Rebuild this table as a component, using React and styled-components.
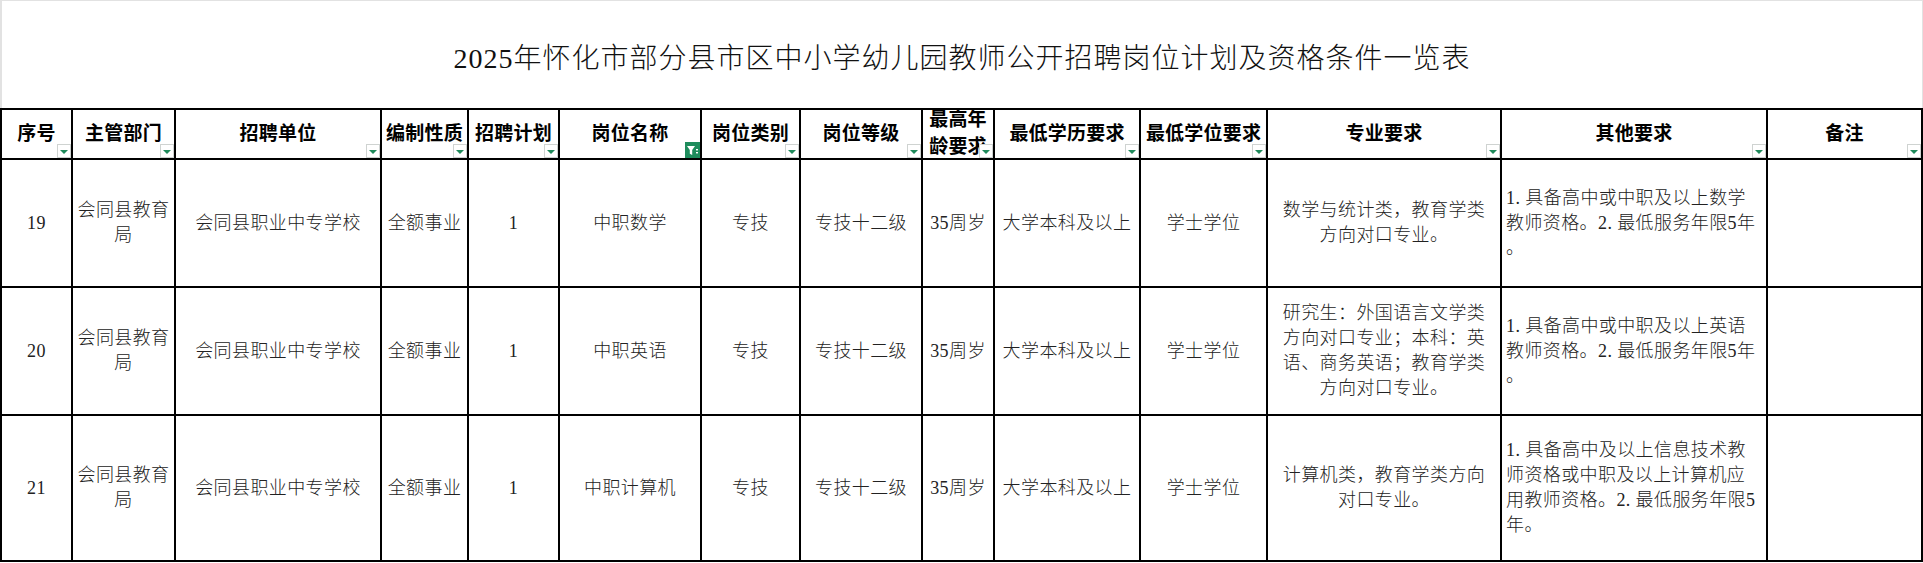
import React from 'react';
import styled, { createGlobalStyle } from 'styled-components';

const GlobalStyle = createGlobalStyle`
    html, body {
        margin: 0;
        padding: 0;
        background: #fff;
        overflow: hidden;
    }
    body {
        font-family: "Liberation Serif", "Noto Sans CJK SC", serif;
    }
`;

// 列宽按截图量出来的
const columns = [
    { title: ['序号'], width: 71 },
    { title: ['主管部门'], width: 103 },
    { title: ['招聘单位'], width: 206 },
    { title: ['编制性质'], width: 87 },
    { title: ['招聘计划'], width: 91 },
    { title: ['岗位名称'], width: 142, active: true },
    { title: ['岗位类别'], width: 99 },
    { title: ['岗位等级'], width: 122 },
    { title: ['最高年', '龄要求'], width: 72 },
    { title: ['最低学历要求'], width: 146 },
    { title: ['最低学位要求'], width: 127 },
    { title: ['专业要求'], width: 234 },
    { title: ['其他要求'], width: 266 },
    { title: ['备注'], width: 155 },
];

const rows = [
    {
        height: 128,
        cells: [
            ['19'], ['会同县教育', '局'], ['会同县职业中专学校'], ['全额事业'], ['1'],
            ['中职数学'], ['专技'], ['专技十二级'], ['35周岁'], ['大学本科及以上'], ['学士学位'],
            ['数学与统计类，教育学类', '方向对口专业。'],
            ['1. 具备高中或中职及以上数学', '教师资格。2. 最低服务年限5年', '。'],
            [],
        ],
    },
    {
        height: 128,
        cells: [
            ['20'], ['会同县教育', '局'], ['会同县职业中专学校'], ['全额事业'], ['1'],
            ['中职英语'], ['专技'], ['专技十二级'], ['35周岁'], ['大学本科及以上'], ['学士学位'],
            ['研究生：外国语言文学类', '方向对口专业；本科：英', '语、商务英语；教育学类', '方向对口专业。'],
            ['1. 具备高中或中职及以上英语', '教师资格。2. 最低服务年限5年', '。'],
            [],
        ],
    },
    {
        height: 146,
        cells: [
            ['21'], ['会同县教育', '局'], ['会同县职业中专学校'], ['全额事业'], ['1'],
            ['中职计算机'], ['专技'], ['专技十二级'], ['35周岁'], ['大学本科及以上'], ['学士学位'],
            ['计算机类，教育学类方向', '对口专业。'],
            ['1. 具备高中及以上信息技术教', '师资格或中职及以上计算机应', '用教师资格。2. 最低服务年限5', '年。'],
            [],
        ],
    },
];

const LEFT_COL = 12; // 其他要求 左对齐

const Sheet = styled.div`
    width: 1923px;
    box-sizing: border-box;
`;

const TitleBar = styled.div`
    height: 108px;
    box-sizing: border-box;
    border-top: 1px solid #e2e2e2;
    border-left: 2px solid #e2e2e2;
    border-right: 1px solid #e2e2e2;
    display: flex;
    align-items: center;
    justify-content: center;
    font-size: 28px;
    font-weight: 300;
    letter-spacing: 1px;
    color: #111;
    padding-top: 2px;
`;

const Grid = styled.div`
    display: grid;
    grid-template-columns: ${p => p.$cols};
    grid-template-rows: ${p => p.$rows};
    border-left: 2px solid #000;
    border-top: 2px solid #000;
`;

const Cell = styled.div`
    box-sizing: border-box;
    border-right: 2px solid #000;
    border-bottom: 2px solid #000;
    display: flex;
    flex-direction: column;
    justify-content: center;
    align-items: ${p => (p.$left ? 'flex-start' : 'center')};
    text-align: ${p => (p.$left ? 'left' : 'center')};
    padding: 0 ${p => (p.$left ? '4px' : '2px')};
    font-size: 18px;
    font-weight: 300;
    line-height: 25px;
    letter-spacing: 0.4px;
    color: #222;
    overflow: hidden;
`;

const HeadCell = styled(Cell)`
    position: relative;
    overflow: visible;
    font-size: 19px;
    font-weight: 700;
    line-height: 27px;
    letter-spacing: 0.2px;
    color: #000;
    padding-bottom: 2px;
`;

const Line = styled.span`
    display: block;
    white-space: nowrap;
`;

const Dropdown = styled.span`
    position: absolute;
    right: 0;
    bottom: 0;
    width: 14px;
    height: 14px;
    box-sizing: border-box;
    border: 1px solid #cfd3d1;
    background: #fff;
    display: flex;
    align-items: center;
    justify-content: center;
    &::after {
        content: '';
        margin-top: 2px;
        border-left: 4px solid transparent;
        border-right: 4px solid transparent;
        border-top: 4px solid #1f8a5b;
    }
`;

const FilterOn = styled.span`
    position: absolute;
    right: 0;
    bottom: 0;
    width: 15px;
    height: 16px;
    background: #1e8c5c;
    display: flex;
    align-items: center;
    justify-content: center;
`;

const FunnelIcon = () => (
    <svg width="13" height="12" viewBox="0 0 13 12">
        <polygon points="1,2 9,2 6.2,6 6.2,11 3.8,9.8 3.8,6" fill="#fff" />
        <rect x="10" y="5" width="2" height="1.4" fill="#fff" />
        <rect x="10" y="8" width="2" height="1.4" fill="#fff" />
    </svg>
);

const App = () => {
    const cols = columns.map(c => `${c.width}px`).join(' ');
    const rowSizes = ['50px', ...rows.map(r => `${r.height}px`)].join(' ');

    return (
        <Sheet>
            <GlobalStyle />
            <TitleBar>2025年怀化市部分县市区中小学幼儿园教师公开招聘岗位计划及资格条件一览表</TitleBar>
            <Grid $cols={cols} $rows={rowSizes}>
                {columns.map((col, i) => (
                    <HeadCell key={`h${i}`}>
                        {col.title.map(t => <Line key={t}>{t}</Line>)}
                        {col.active ? (
                            <FilterOn><FunnelIcon /></FilterOn>
                        ) : (
                            <Dropdown />
                        )}
                    </HeadCell>
                ))}
                {rows.map((row, r) =>
                    row.cells.map((lines, i) => (
                        <Cell key={`${r}-${i}`} $left={i === LEFT_COL}>
                            {lines.map((t, k) => <Line key={k}>{t}</Line>)}
                        </Cell>
                    ))
                )}
            </Grid>
        </Sheet>
    );
};

export default App;
